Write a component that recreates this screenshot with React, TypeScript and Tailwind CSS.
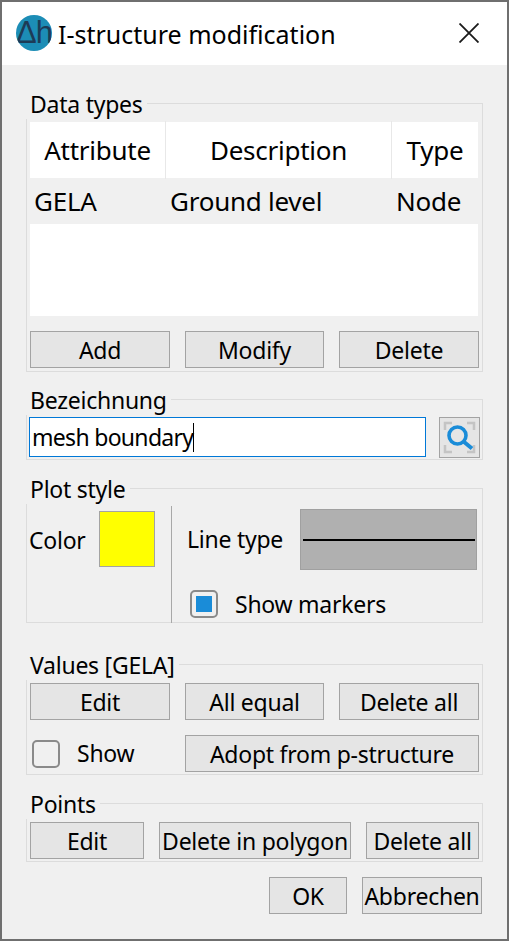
import type { ReactNode } from "react"

function Btn({ w, children }: { w: string; children: ReactNode }) {
  return (
    <button className={`${w} h-[37px] shrink-0 border border-[#a3a3a3] bg-[#e5e5e5] pt-[1px] flex items-center justify-center whitespace-nowrap leading-none`}>
      {children}
    </button>
  )
}

function Group({ title, className, children }: { title: string; className: string; children: ReactNode }) {
  return (
    <section className={`relative w-[457px] border border-[#dcdcdc] ${className}`}>
      <span className="absolute -left-[1px] -top-[15px] h-[30px] bg-[#f0f0f0] pl-[4px] pr-[4px] leading-[30px]">{title}</span>
      {children}
    </section>
  )
}

function Checkbox({ checked }: { checked?: boolean }) {
  return (
    <span className="flex h-[28px] w-[28px] shrink-0 items-center justify-center rounded-[5px] border-2 border-[#8a8a8a] bg-[#f0f0f0]">
      {checked && <span className="h-[16px] w-[16px] bg-[#1a8cd8]" />}
    </span>
  )
}

export default function App() {
  return (
    <div className="h-[941px] w-[509px] overflow-hidden border-2 border-[#6f6f6f] bg-[#f0f0f0] text-[23px] tracking-[-0.25px] text-black font-['Noto_Sans','Open_Sans',sans-serif]">
      <header className="flex h-[63px] items-center bg-white pl-[14px] pr-[28px]">
        <div className="mb-[2px] flex h-[36px] w-[36px] shrink-0 items-center justify-center overflow-hidden rounded-full bg-[#1c8db6] text-[31px] leading-none text-[#1d3b56]">
          <span className="whitespace-nowrap tracking-[-1px] font-['Liberation_Sans',sans-serif]">Δh</span>
        </div>
        <h1 className="ml-[6px] mt-[2px] whitespace-nowrap text-[25px] tracking-normal leading-none">I-structure modification</h1>
        <svg className="ml-auto mb-[2px]" width="20" height="20" viewBox="0 0 20 20">
          <path d="M0.5 0.5 L19.5 19.5 M19.5 0.5 L0.5 19.5" stroke="#1a1a1a" strokeWidth="1.8" fill="none" />
        </svg>
      </header>

      <main className="pl-[24px]">
        <Group title="Data types" className="mt-[38px] h-[269px] pl-[3px] pt-[18px]">
          <div className="h-[194px] w-[448px] bg-white text-[26px]">
            <div className="flex h-[56px] items-center text-center">
              <div className="w-[136px] border-r border-[#e8e8e8] leading-[58px]">Attribute</div>
              <div className="w-[226px] border-r border-[#e8e8e8] leading-[58px]">Description</div>
              <div className="flex-1 leading-[58px]">Type</div>
            </div>
            <div className="flex h-[46px] items-center bg-[#f0f0f0] leading-[50px]">
              <div className="w-[136px] pl-[4px]">GELA</div>
              <div className="w-[226px] pl-[4px]">Ground level</div>
              <div className="flex-1 pl-[4px]">Node</div>
            </div>
          </div>
          <div className="mt-[15px] flex gap-[15px]">
            <Btn w="w-[140px]">Add</Btn>
            <Btn w="w-[139px]">Modify</Btn>
            <Btn w="w-[140px]">Delete</Btn>
          </div>
        </Group>

        <Group title="Bezeichnung" className="mt-[27px] h-[61px] pl-[2px] pt-[17px]">
          <div className="flex items-start">
            <div className="flex h-[40px] w-[397px] items-center border border-[#0078d7] bg-white pl-[2px] leading-none tracking-[-0.7px]">
              <span>mesh boundary</span>
              <span className="h-[29px] w-[1px] bg-black" />
            </div>
            <button className="ml-[13px] flex h-[41px] w-[41px] items-center justify-center border border-[#a3a3a3] bg-[#e5e5e5]">
              <svg width="33" height="33" viewBox="0 0 33 33" fill="none">
                <path d="M2 9 V2 H9 M24 2 H31 V9 M2 24 V31 H9 M24 31 H31 V24" stroke="#c4c4c4" strokeWidth="2.5" />
                <circle cx="14.5" cy="14.5" r="8.5" stroke="#1a8cd8" strokeWidth="3.6" />
                <path d="M20.5 20.5 L29 27.5" stroke="#1a8cd8" strokeWidth="4" />
              </svg>
            </button>
          </div>
        </Group>

        <Group title="Plot style" className="mt-[28px] flex h-[135px]">
          <div className="mt-[17px] flex h-[117px] w-[145px] items-start border-r border-[#a8a8a8] pl-[2px]">
            <span className="mt-[18px] w-[70px] leading-[33px]">Color</span>
            <div className="mt-[5px] h-[56px] w-[56px] border border-[#a3a3a3] bg-[#ffff00]" />
          </div>
          <div className="flex-1 pl-[15px] pt-[20px]">
            <div className="flex items-center">
              <span className="w-[113px] whitespace-nowrap">Line type</span>
              <div className="flex h-[61px] w-[177px] items-center border border-[#a0a0a0] bg-[#b0b0b0] pl-[2px] pr-[1px]">
                <div className="h-[2px] w-full bg-black" />
              </div>
            </div>
            <label className="ml-[3px] mt-[19px] flex items-center gap-[17px] leading-[30px]">
              <Checkbox checked />
              <span>Show markers</span>
            </label>
          </div>
        </Group>

        <Group title="Values [GELA]" className="mt-[41px] h-[111px] pl-[3px] pt-[18px]">
          <div className="flex gap-[15px]">
            <Btn w="w-[140px]">Edit</Btn>
            <Btn w="w-[139px]">All equal</Btn>
            <Btn w="w-[140px]">Delete all</Btn>
          </div>
          <div className="mt-[15px] flex items-center">
            <label className="ml-[2px] flex w-[153px] items-center gap-[17px]">
              <Checkbox />
              <span>Show</span>
            </label>
            <Btn w="w-[294px]">Adopt from p-structure</Btn>
          </div>
        </Group>

        <Group title="Points" className="mt-[28px] h-[59px] pl-[3px] pt-[18px]">
          <div className="flex gap-[15px]">
            <Btn w="w-[114px]">Edit</Btn>
            <Btn w="w-[192px]">Delete in polygon</Btn>
            <Btn w="w-[113px]">Delete all</Btn>
          </div>
        </Group>

        <footer className="mt-[15px] flex w-[456px] justify-end gap-[15px]">
          <Btn w="w-[78px]">OK</Btn>
          <Btn w="w-[120px]">Abbrechen</Btn>
        </footer>
      </main>
    </div>
  )
}
